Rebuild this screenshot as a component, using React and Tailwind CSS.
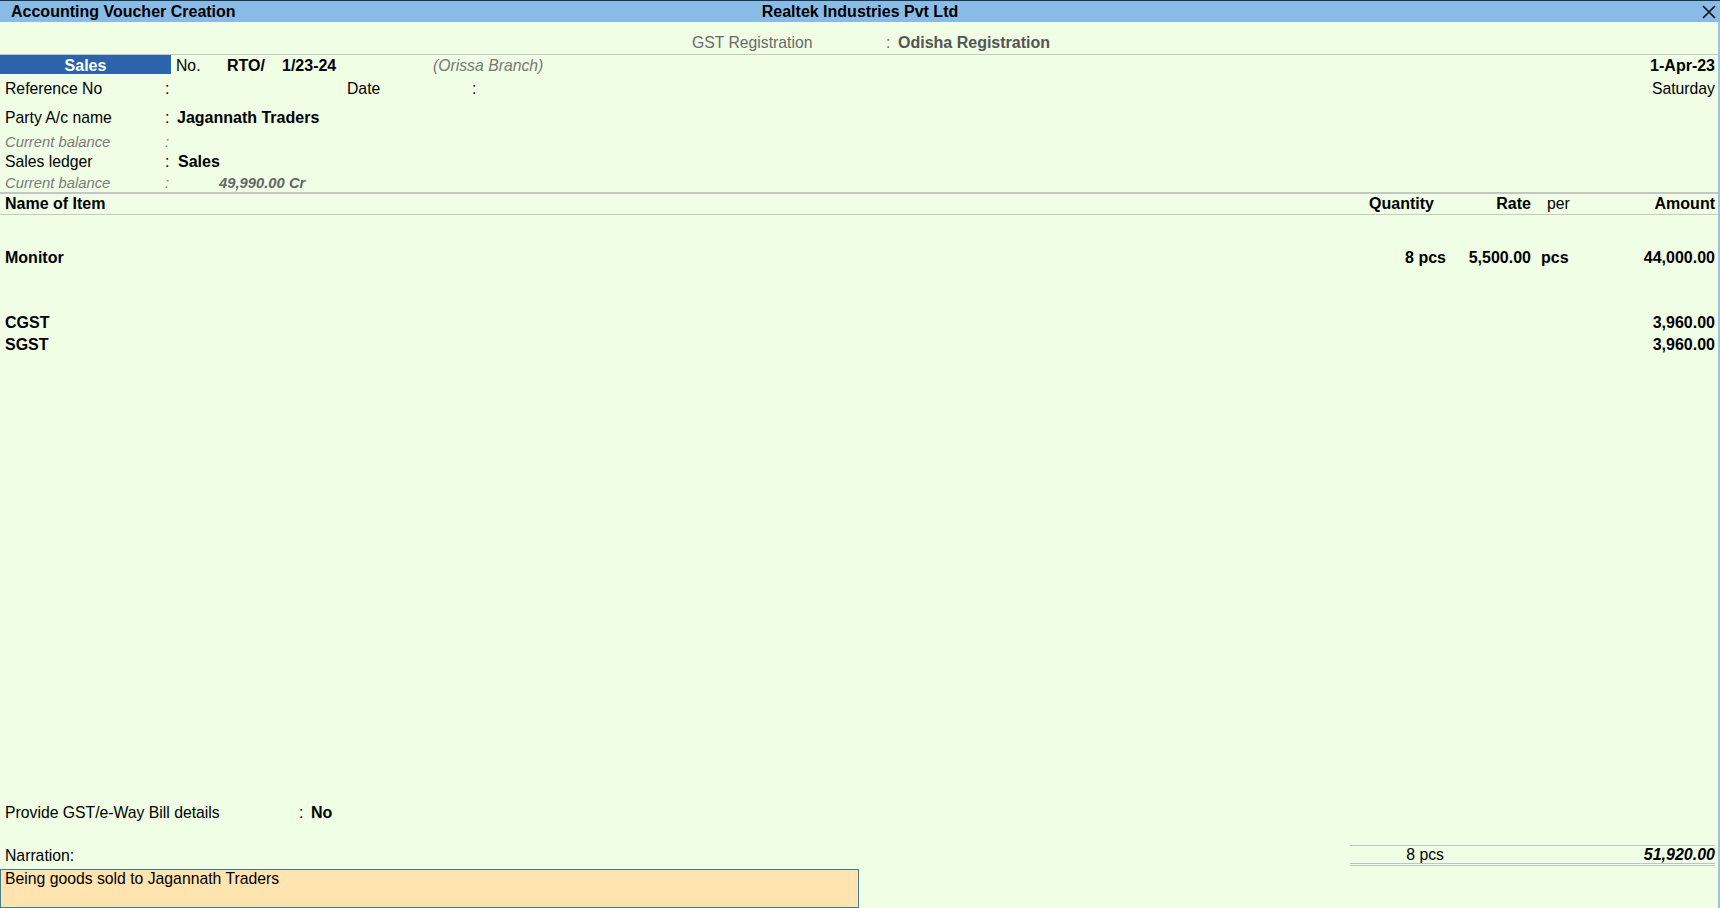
import React from 'react';

const items = [
  { name: 'Monitor', qty: '8 pcs', rate: '5,500.00', per: 'pcs', amount: '44,000.00' },
];

const taxes = [
  { name: 'CGST', amount: '3,960.00' },
  { name: 'SGST', amount: '3,960.00' },
];

const CloseIcon = () => (
  <svg width="14" height="14" viewBox="0 0 14 14" className="block">
    <path d="M1 1 L13 13 M13 1 L1 13" stroke="#111" strokeWidth="1.7" />
  </svg>
);

const App = () => {
  return (
    <div
      className="w-full h-[908px] bg-[#effee5] flex flex-col text-black text-[15.75px] leading-[20px] overflow-hidden border-t border-[#1d3644]"
      style={{ fontFamily: '"Liberation Sans", Arial, sans-serif' }}
    >
      {/* Title bar */}
      <div className="h-[21px] bg-[#88bce6] grid grid-cols-[1fr_auto_1fr] items-center px-[11px] font-bold text-[16px]">
        <span>Accounting Voucher Creation</span>
        <span>Realtek Industries Pvt Ltd</span>
        <span className="flex justify-end -mr-[7px]"><CloseIcon /></span>
      </div>

      <div className="flex-1 flex flex-col border-r-2 border-[#9cc4df] min-h-0">
        {/* GST registration */}
        <div className="h-[33px] pt-[11px] border-b border-[#c3cbc1] flex pl-[692px] text-[#6a6a6a]">
          <span className="w-[194px]">GST Registration</span>
          <span className="w-[12px]">:</span>
          <span className="font-bold text-[16px] text-[#555]">Odisha Registration</span>
        </div>

        {/* Voucher type row */}
        <div className="h-[19px] flex items-stretch pr-[3px] leading-[17px]">
          <div className="w-[171px] bg-[#2b64ad] text-white font-bold text-[16px] text-center pt-[2px]">Sales</div>
          <span className="ml-[5px] w-[51px] pt-[2px]">No.</span>
          <span className="font-bold text-[16px] w-[55px] pt-[2px]">RTO/</span>
          <span className="font-bold text-[16px] w-[151px] pt-[2px]">1/23-24</span>
          <span className="italic text-[#777] pt-[2px]">(Orissa Branch)</span>
          <span className="flex-1" />
          <span className="font-bold text-[16px] pt-[2px]">1-Apr-23</span>
        </div>

        {/* Reference / Date */}
        <div className="h-[27px] pt-[5px] flex pl-[5px] pr-[3px]">
          <span className="w-[160px]">Reference No</span>
          <span className="w-[182px]">:</span>
          <span className="w-[125px]">Date</span>
          <span>:</span>
          <span className="flex-1" />
          <span>Saturday</span>
        </div>

        {/* Party */}
        <div className="h-[28px] pt-[7px] flex pl-[5px]">
          <span className="w-[160px]">Party A/c name</span>
          <span className="w-[12px]">:</span>
          <span className="font-bold text-[16px]">Jagannath Traders</span>
        </div>
        <div className="h-[23px] pt-[3px] flex pl-[5px] italic text-[#7a7a7a] text-[14.8px]">
          <span className="w-[160px]">Current balance</span>
          <span>:</span>
        </div>

        {/* Sales ledger */}
        <div className="h-[20px] flex pl-[5px]">
          <span className="w-[160px]">Sales ledger</span>
          <span className="w-[13px]">:</span>
          <span className="font-bold text-[16px]">Sales</span>
        </div>
        <div className="h-[20px] pt-[1px] flex pl-[5px] italic text-[#7a7a7a] text-[14.8px]">
          <span className="w-[160px]">Current balance</span>
          <span className="w-[54px]">:</span>
          <span className="font-bold text-[#666]">49,990.00 Cr</span>
        </div>

        {/* Item table header */}
        <div className="border-t-2 border-[#c3c6c3] border-b border-b-[#c3cbc1] h-[23px] flex items-center pl-[5px] pr-[3px] font-bold text-[16px]">
          <span className="flex-1">Name of Item</span>
          <span className="w-[100px] text-right pr-[12px]">Quantity</span>
          <span className="w-[85px] text-right">Rate</span>
          <span className="w-[59px] pl-[16px] font-normal text-[15.75px]">per</span>
          <span className="w-[125px] text-right">Amount</span>
        </div>

        {/* Items */}
        <div className="pt-[33px] pl-[5px] pr-[3px] font-bold text-[16px]">
          {items.map((it) => (
            <div key={it.name} className="flex h-[20px]">
              <span className="flex-1">{it.name}</span>
              <span className="w-[100px] text-right">{it.qty}</span>
              <span className="w-[85px] text-right">{it.rate}</span>
              <span className="w-[59px] pl-[10px]">{it.per}</span>
              <span className="w-[125px] text-right">{it.amount}</span>
            </div>
          ))}
          <div className="mt-[44px]">
            {taxes.map((t) => (
              <div key={t.name} className="flex h-[22px] leading-[22px]">
                <span className="flex-1">{t.name}</span>
                <span className="w-[125px] text-right">{t.amount}</span>
              </div>
            ))}
          </div>
        </div>

        <div className="flex-1" />

        {/* Footer */}
        <div className="h-[20px] flex pl-[5px] mb-[23px] pt-[1px]">
          <span className="w-[294px]">Provide GST/e-Way Bill details</span>
          <span className="w-[12px]">:</span>
          <span className="font-bold text-[16px]">No</span>
        </div>

        <div className="flex pr-[3px]">
          <div className="flex-1 pl-[5px] pt-[1px]">Narration:</div>
          <div className="w-[365px] h-[21px] border-t border-[#bcc6c0] border-b-[3px] border-b-[#bcc6c0] border-double flex items-center">
            <span className="w-[94px] text-right">8 pcs</span>
            <span className="flex-1 text-right font-bold italic text-[16px]">51,920.00</span>
          </div>
        </div>

        <div className="mt-[3px] h-[39px] w-[859px] bg-[#ffe4b0] border border-[#3f7d88] pl-[4px] leading-[18px]">
          Being goods sold to Jagannath Traders
        </div>
      </div>
    </div>
  );
};

export default App;
